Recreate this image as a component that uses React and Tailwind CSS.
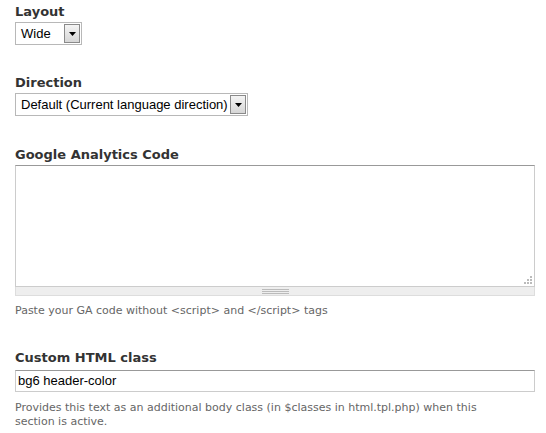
import React from 'react';

function Label({ children }) {
  return (
    <label className="block text-[13px] font-bold leading-[16px] text-[#333] font-['DejaVu_Sans',Verdana,sans-serif]">
      {children}
    </label>
  );
}

function SelectBox({ value, width }) {
  return (
    <div className={`flex h-[23px] items-stretch border border-[#b8b8b8] bg-white ${width}`}>
      <span className="flex-1 pl-[5px] pt-[3px] text-[13px] leading-[16px] text-black font-['Liberation_Sans',Arial,sans-serif] whitespace-nowrap">
        {value}
      </span>
      <span className="my-[1px] mr-[1px] flex w-[16px] items-center justify-center border border-[#8a8a8a] bg-gradient-to-b from-[#f4f4f4] to-[#d6d6d6]">
        <svg width="7" height="4" viewBox="0 0 7 4">
          <path d="M0 0h7L3.5 4z" fill="#000" />
        </svg>
      </span>
    </div>
  );
}

function Help({ children }) {
  return (
    <p className="text-[11px] leading-[14px] text-[#666] font-['DejaVu_Sans',Verdana,sans-serif]">
      {children}
    </p>
  );
}

export default function App() {
  return (
    <div className="w-[546px] h-[433px] bg-white px-[15px] pt-[4px]">
      <Label>Layout</Label>
      <div className="mt-[2px]">
        <SelectBox value="Wide" width="w-[67px]" />
      </div>

      <div className="mt-[30px]">
        <Label>Direction</Label>
        <div className="mt-[2px]">
          <SelectBox value="Default (Current language direction)" width="w-[233px]" />
        </div>
      </div>

      <div className="mt-[31px]">
        <Label>Google Analytics Code</Label>
        <div className="mt-[2px] w-[520px]">
          <div className="relative h-[122px] border border-[#ccc] border-t-[#999] bg-white">
            <div className="absolute bottom-[2px] right-[2px] grid grid-cols-3 gap-[1px]">
              <span className="h-[2px] w-[2px]" />
              <span className="h-[2px] w-[2px]" />
              <span className="h-[2px] w-[2px] bg-[#bbb]" />
              <span className="h-[2px] w-[2px]" />
              <span className="h-[2px] w-[2px] bg-[#bbb]" />
              <span className="h-[2px] w-[2px] bg-[#bbb]" />
              <span className="h-[2px] w-[2px] bg-[#bbb]" />
              <span className="h-[2px] w-[2px] bg-[#bbb]" />
              <span className="h-[2px] w-[2px] bg-[#bbb]" />
            </div>
          </div>
          <div className="flex h-[9px] flex-col items-center justify-center gap-[1px] border border-t-0 border-[#ddd] bg-[#eee]">
            <span className="h-[1px] w-[27px] bg-[#bbb]" />
            <span className="h-[1px] w-[27px] bg-[#bbb]" />
            <span className="h-[1px] w-[27px] bg-[#bbb]" />
          </div>
        </div>
        <div className="mt-[8px]">
          <Help>Paste your GA code without &lt;script&gt; and &lt;/script&gt; tags</Help>
        </div>
      </div>

      <div className="mt-[32px]">
        <Label>Custom HTML class</Label>
        <div className="mt-[4px] flex h-[22px] w-[520px] items-center border border-[#ccc] border-t-[#999] bg-white pl-[2px] text-[13px] text-black font-['Liberation_Sans',Arial,sans-serif]">
          bg6 header-color
        </div>
        <div className="mt-[9px]">
          <Help>
            Provides this text as an additional body class (in $classes in html.tpl.php) when this
            <br />
            section is active.
          </Help>
        </div>
      </div>
    </div>
  );
}
